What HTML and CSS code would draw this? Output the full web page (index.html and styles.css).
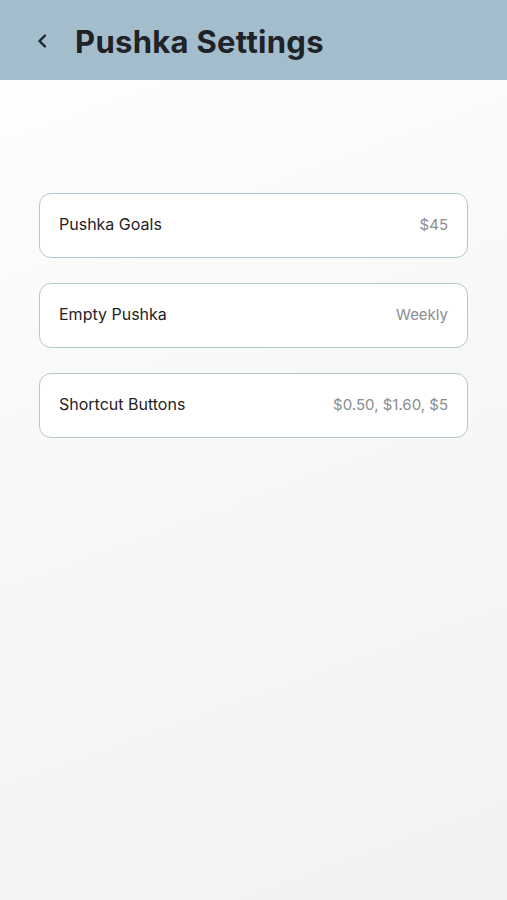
FILE: index.html
```html
<!DOCTYPE html>
<html lang="en">
  <head>
    <meta charset="UTF-8" />
    <meta name="viewport" content="width=device-width, initial-scale=1.0" />
    <title>Pushka Settings</title>
    <link rel="stylesheet" href="styles.css">
  </head>
  <body>
    <div class="header">
      <button class="back">
        <svg width="12" height="16" viewBox="0 0 12 16">
          <path d="M9 2.5 L3.5 8 L9 13.5" fill="none" stroke="#1f2226" stroke-width="2.4" stroke-linecap="round" stroke-linejoin="round" />
        </svg>
      </button>
      <h1>Pushka Settings</h1>
    </div>

    <div class="list">
      <div class="row">
        <span class="label">Pushka Goals</span>
        <span class="value">$45</span>
      </div>
      <div class="row">
        <span class="label">Empty Pushka</span>
        <span class="value">Weekly</span>
      </div>
      <div class="row">
        <span class="label">Shortcut Buttons</span>
        <span class="value">$0.50, $1.60, $5</span>
      </div>
    </div>
  </body>
</html>
```

FILE: styles.css
```css
body {
  margin: 0;
  font-family: Inter, "Open Sans", sans-serif;
  height: 900px;
  background: linear-gradient(160deg, #ffffff 0%, #f8f8f8 45%, #f2f2f2 100%);
  color: #1f2226;
}
.header {
  height: 80px;
  background: #a3bdcc;
  display: flex;
  align-items: center;
  padding-left: 36px;
  padding-top: 2px;
  box-sizing: border-box;
}
.back {
  background: none;
  border: none;
  padding: 0;
  width: 14px;
  height: 20px;
  display: flex;
  align-items: center;
  cursor: pointer;
}
h1 {
  margin: 0 0 0 25px;
  font-size: 31px;
  font-weight: 700;
  letter-spacing: 0.3px;
  color: #1f2226;
}
.list {
  padding: 113px 39px 0 39px;
  display: flex;
  flex-direction: column;
  gap: 25px;
}
.row {
  height: 65px;
  box-sizing: border-box;
  border: 1.5px solid #b3c6cf;
  border-radius: 12px;
  background: #ffffff;
  display: flex;
  align-items: center;
  justify-content: space-between;
  padding: 0 19px 3px 19px;
  font-size: 16px;
}
.label {
  color: #1f2226;
}
.value {
  color: #8a8d90;
  font-size: 15px;
}
```
